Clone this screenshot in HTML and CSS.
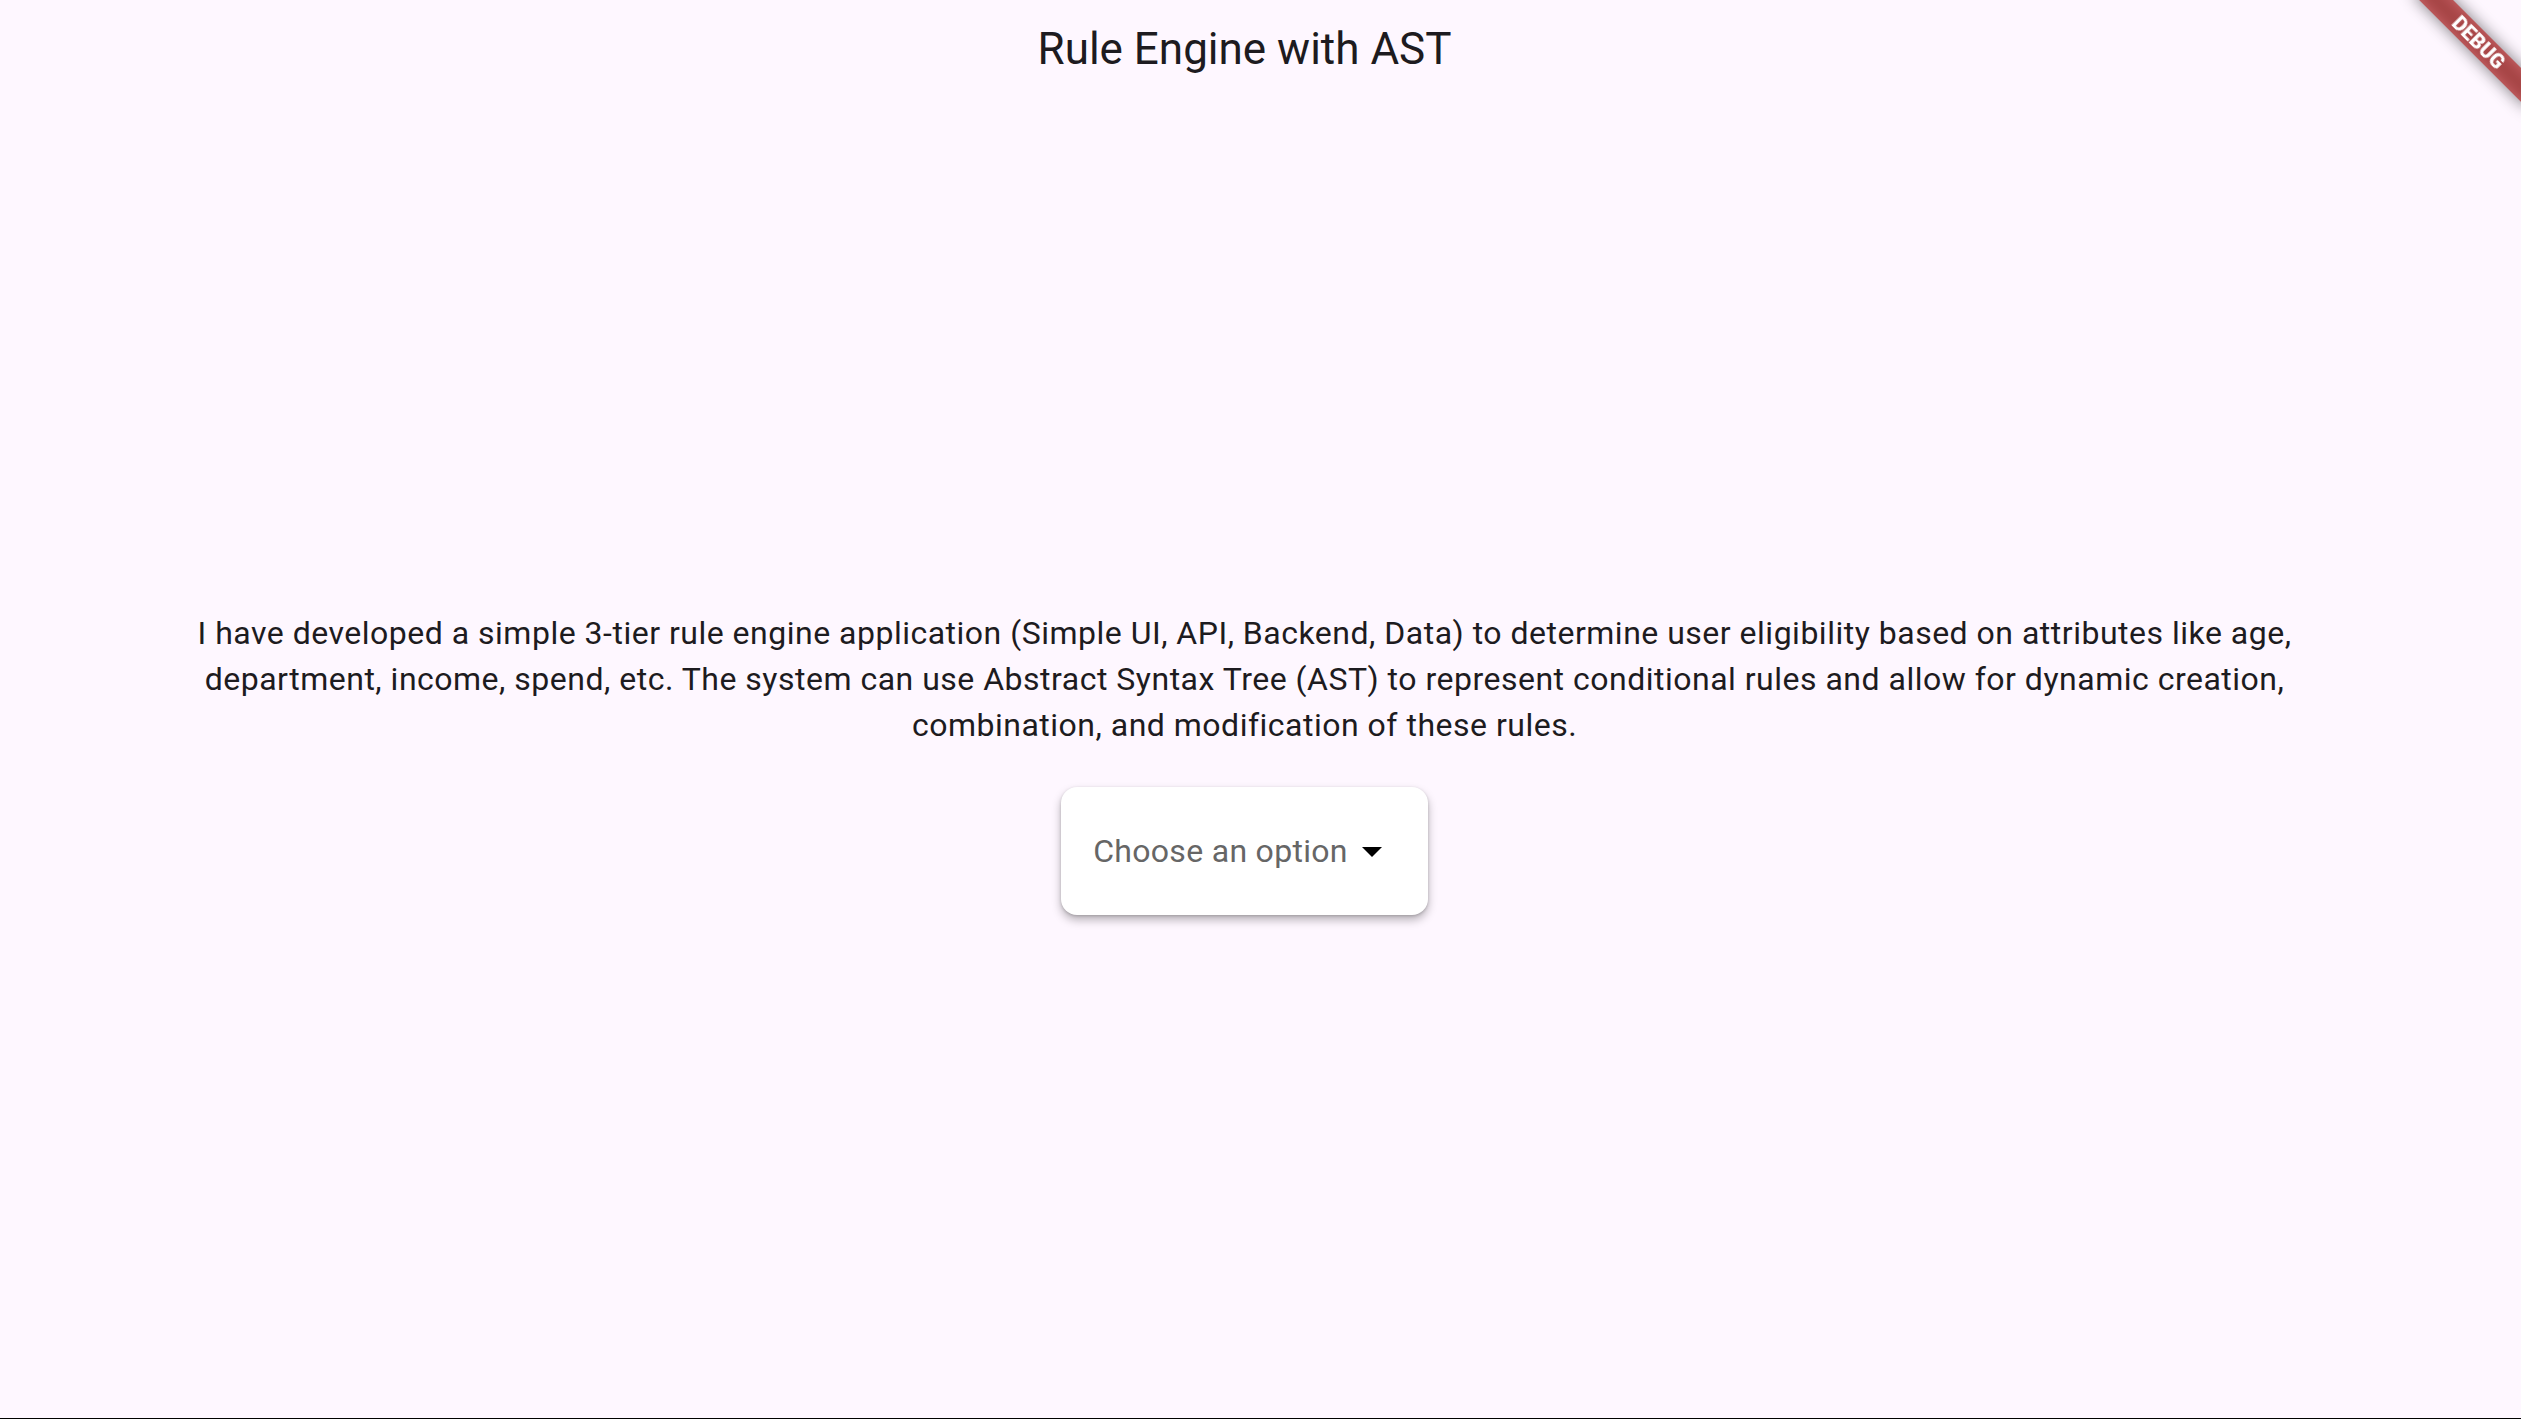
FILE: index.html
```html
<!DOCTYPE html>
<html lang="en">
<head>
<meta charset="utf-8">
<title>Rule Engine with AST</title>
<link rel="stylesheet" href="styles.css">
</head>
<body>
<div class="app">
  <header class="app-bar">
    <h1 class="app-title">Rule Engine with AST</h1>
  </header>
  <main class="content">
    <p class="intro">I have developed a simple 3-tier rule engine application (Simple UI, API, Backend, Data) to determine user eligibility based on attributes like age, department, income, spend, etc. The system can use Abstract Syntax Tree (AST) to represent conditional rules and allow for dynamic creation, combination, and modification of these rules.</p>
    <div class="dropdown">
      <span class="dropdown-hint">Choose an option</span>
      <svg class="dropdown-icon" width="48" height="48" viewBox="0 0 48 48" aria-hidden="true">
        <polygon points="14,20 34,20 24,30" fill="#000"/>
      </svg>
    </div>
  </main>
  <div class="bottom-edge"></div>
</div>
<div class="debug-corner">
  <div class="debug-shadow"></div>
  <div class="debug-band">DEBUG</div>
</div>
</body>
</html>
```

FILE: styles.css
```css
html, body {
  margin: 0;
  padding: 0;
  height: 100%;
  overflow: hidden;
}

body {
  background: #fef7ff;
  font-family: Roboto, "Liberation Sans", sans-serif;
  color: #1d1b20;
}

.app {
  display: flex;
  flex-direction: column;
  height: 100vh;
  padding-right: 32px;
  box-sizing: border-box;
}

.app-bar {
  height: 108px;
  padding-bottom: 10px;
  box-sizing: border-box;
  display: flex;
  align-items: center;
  justify-content: center;
  flex: 0 0 auto;
}

.app-title {
  margin: 0;
  font-size: 44px;
  font-weight: 400;
  line-height: 56px;
  color: #1d1b20;
}

.content {
  flex: 1 1 auto;
  display: flex;
  flex-direction: column;
  align-items: center;
  justify-content: center;
  gap: 38px;
}

.intro {
  margin: 0;
  max-width: 2200px;
  text-align: center;
  font-size: 32px;
  line-height: 45.8px;
  letter-spacing: 0.5px;
  color: #1d1b20;
}

.dropdown {
  display: flex;
  align-items: center;
  height: 128px;
  padding: 0 32px;
  background: #ffffff;
  border-radius: 16px;
  box-shadow: 0 5px 10px rgba(0, 0, 0, 0.28), 0 1px 3px rgba(0, 0, 0, 0.18);
}

.dropdown-hint {
  font-size: 32px;
  letter-spacing: 0.3px;
  color: #666666;
  line-height: 48px;
}

.dropdown-icon {
  display: block;
  flex: 0 0 auto;
}

.bottom-edge {
  height: 1px;
  background: #000;
  flex: 0 0 auto;
  margin-right: -32px;
}

.debug-corner {
  position: fixed;
  top: 0;
  right: 0;
  width: 0;
  height: 0;
  transform-origin: 0 0;
  transform: rotate(45deg);
  pointer-events: none;
}

.debug-shadow,
.debug-band {
  position: absolute;
  left: -80px;
  top: 48px;
  width: 160px;
  height: 24px;
}

.debug-shadow {
  background: rgba(0, 0, 0, 0.5);
  filter: blur(8px);
}

.debug-band {
  background: rgba(183, 28, 28, 0.627);
  color: #ffffff;
  font-family: Roboto, "Liberation Sans", sans-serif;
  font-size: 20.4px;
  font-weight: 900;
  line-height: 24px;
  text-align: center;
}
```
